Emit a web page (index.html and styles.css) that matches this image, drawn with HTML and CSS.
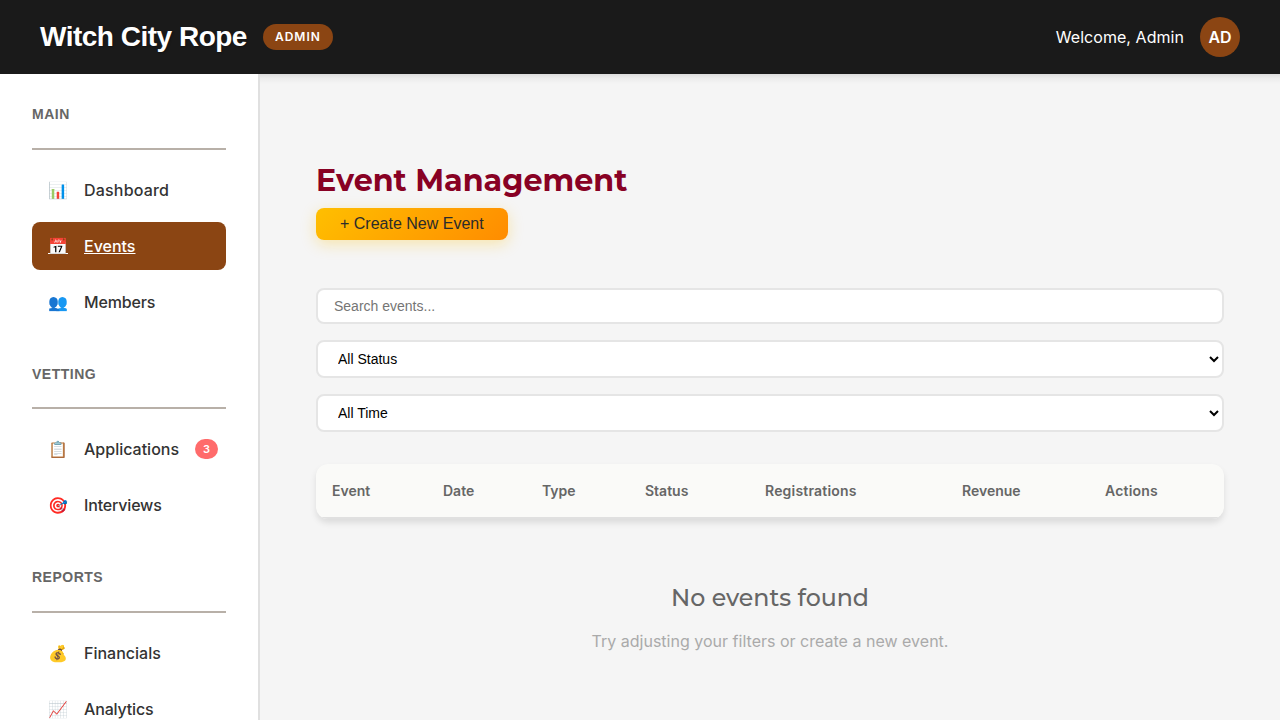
FILE: index.html
```html
<!DOCTYPE html>
<html lang="en">
<head>
<meta charset="utf-8">
<title>Event Management</title>
<link rel="stylesheet" href="styles.css">
</head>
<body>
<header class="header">
  <div class="brand"><span class="logo">Witch City Rope</span><span class="role">ADMIN</span></div>
  <div class="user"><span class="welcome">Welcome, Admin</span><span class="avatar">AD</span></div>
</header>
<div class="layout">
  <nav class="sidebar">
    <section class="group">
      <h3 class="group-title">MAIN</h3>
      <a class="item"><span class="icon">📊</span><span class="loose">Dashboard</span></a>
      <a class="item active"><span class="icon">📅</span><span>Events</span></a>
      <a class="item"><span class="icon">👥</span><span class="tight">Members</span></a>
    </section>
    <section class="group">
      <h3 class="group-title">VETTING</h3>
      <a class="item"><span class="icon">📋</span><span>Applications</span><span class="count">3</span></a>
      <a class="item"><span class="icon">🎯</span><span class="tight">Interviews</span></a>
    </section>
    <section class="group">
      <h3 class="group-title">REPORTS</h3>
      <a class="item"><span class="icon">💰</span><span>Financials</span></a>
      <a class="item"><span class="icon">📈</span><span class="tight">Analytics</span></a>
    </section>
  </nav>
  <main class="main">
    <h1 class="title">Event Management</h1>
    <button class="create">+ Create New Event</button>
    <div class="filters">
      <input class="field search" type="text" placeholder="Search events...">
      <select class="field select"><option>All Status</option></select>
      <select class="field select"><option>All Time</option></select>
    </div>
    <table class="table">
      <colgroup><col class="c-event"><col class="c-date"><col class="c-type"><col class="c-status"><col class="c-reg"><col class="c-rev"><col class="c-act"></colgroup>
      <thead><tr><th>Event</th><th>Date</th><th>Type</th><th>Status</th><th class="loose">Registrations</th><th>Revenue</th><th class="loose">Actions</th></tr></thead>
    </table>
    <div class="empty">
      <h3 class="empty-title">No events found</h3>
      <p class="empty-text">Try adjusting your filters or create a new event.</p>
    </div>
  </main>
</div>
</body>
</html>
```
FILE: styles.css
```css
* { box-sizing: border-box; }
body {
  margin: 0;
  height: 720px;
  overflow: hidden;
  display: flex;
  flex-direction: column;
  background: #f5f5f5;
  color: #2b2b2b;
  font: 16px/24px Inter, sans-serif;
}
.header {
  position: relative;
  z-index: 1;
  flex: 0 0 74px;
  display: flex;
  align-items: center;
  justify-content: space-between;
  padding: 0 40px;
  background: #1a1a1a;
  color: #fff;
}
.brand, .user { display: flex; align-items: center; gap: 16px; }
.logo {
  font: bold 28px/32px "Liberation Sans", sans-serif;
  letter-spacing: -0.5px;
  text-shadow: 1px 1px 2px rgba(0, 0, 0, 0.3);
}
.role {
  height: 26px;
  padding: 0 12px;
  border-radius: 13px;
  background: #8b4513;
  font-size: 12px;
  font-weight: 600;
  line-height: 26px;
  letter-spacing: 1px;
}
.welcome { letter-spacing: 0.05px; }
.loose { letter-spacing: 0.19px; }
.tight { letter-spacing: -0.17px; }
.avatar {
  width: 40px;
  height: 40px;
  border-radius: 50%;
  background: #8b4513;
  font-weight: 600;
  line-height: 40px;
  text-align: center;
}
.layout { flex: 1; min-height: 0; display: flex; }
.sidebar {
  flex: 0 0 260px;
  padding: 32px;
  overflow: hidden;
  background: #fff;
  border-right: 2px solid #e0e0e0;
}
.group { margin-bottom: 39.4px; }
.group-title {
  height: 44px;
  margin: 0 0 16px;
  padding-top: 0.2px;
  border-bottom: 2px solid #b8b0a8;
  color: #666;
  font: bold 14px/16px "Liberation Sans", sans-serif;
  letter-spacing: 0.5px;
}
.item {
  display: flex;
  align-items: center;
  gap: 16px;
  height: 48px;
  margin-bottom: 8px;
  padding: 0 16px;
  border-radius: 8px;
  color: #333;
  font-weight: 500;
}
.active { background: #8b4513; color: #fff; text-decoration: underline; }
.icon { width: 20px; }
.count {
  height: 20px;
  padding: 0 8px;
  border-radius: 10px;
  background: #ff6b6b;
  color: #fff;
  font-size: 11px;
  font-weight: 600;
  line-height: 20px;
}
.main {
  flex: 1;
  padding: 88px 56px 0;
  background: linear-gradient(rgba(0, 0, 0, 0.1), rgba(0, 0, 0, 0.04) 4px, transparent 10px) no-repeat;
}
.title {
  margin: 0;
  color: #880124;
  font: bold 30.2px/38px Montserrat, Inter, sans-serif;
}
.create {
  display: block;
  height: 32px;
  margin: 8px 0 48px;
  padding: 0 24px;
  border: 0;
  border-radius: 8px;
  background: linear-gradient(135deg, #ffbf00, #ff8c00);
  color: #2b2b2b;
  font: 16px "Liberation Sans", sans-serif;
  box-shadow: 0 4px 15px rgba(255, 191, 0, 0.3);
}
.filters { display: grid; gap: 16px; margin-bottom: 32px; }
.field {
  width: 100%;
  border: 2px solid #e5e5e5;
  border-radius: 8px;
  background: #fff;
  color: #000;
  font: 14px "Liberation Sans", sans-serif;
}
.search { height: 36px; padding: 0 16px; }
.select { height: 38px; padding: 0 0 0 16px; }
.table {
  width: 100%;
  table-layout: fixed;
  border-spacing: 0;
  border-radius: 12px;
  overflow: hidden;
  background: #fafaf8;
  box-shadow: 0 4px 6px rgba(0, 0, 0, 0.1);
}
.table th {
  height: 55px;
  padding: 0 16px;
  border-bottom: 2px solid #e0e0e0;
  color: #666;
  font-size: 14px;
  font-weight: 600;
  text-align: left;
}
.c-event { width: 111px; }
.c-date { width: 99px; }
.c-type { width: 103px; }
.c-status { width: 120px; }
.c-reg { width: 197px; }
.c-rev { width: 143px; }
.c-act { width: 135px; }
.empty { padding-top: 64px; text-align: center; }
.empty-title {
  margin: 0 0 17px;
  color: #666;
  font: 500 23.7px/29px Montserrat, Inter, sans-serif;
}
.empty-text { margin: 0; color: #aaa; letter-spacing: 0.01px; }
```
